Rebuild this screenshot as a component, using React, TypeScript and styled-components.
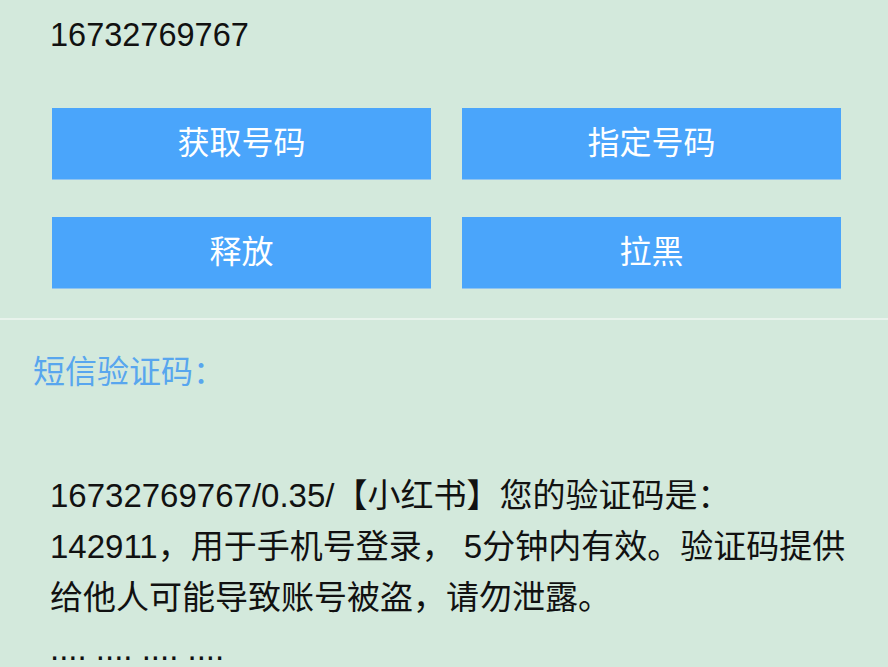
import styled, { createGlobalStyle } from 'styled-components';

const GlobalStyle = createGlobalStyle`
  html, body {
    margin: 0;
    padding: 0;
    background: #d3e9dc;
  }
  body {
    font-family: "Liberation Sans", "Noto Sans CJK SC", sans-serif;
    color: #111;
  }
`;

const Page = styled.div`
  width: 888px;
  height: 667px;
  overflow: hidden;
  background: #d3e9dc;
`;

const Top = styled.section`
  padding: 19px 47px 0 52px;
`;

const Phone = styled.div`
  font-size: 32.5px;
  line-height: 32px;
  height: 32px;
  margin-left: -2px;
`;

const ButtonGrid = styled.div`
  display: grid;
  grid-template-columns: 1fr 1fr;
  grid-auto-rows: 71px;
  column-gap: 31px;
  row-gap: 38px;
  margin-top: 57px;
`;

const ActionButton = styled.button`
  border: none;
  border-radius: 0;
  background: #4aa5fb;
  color: #fff;
  font-family: "Noto Sans CJK SC", sans-serif;
  font-size: 32px;
  padding: 0 0 7px;
  display: flex;
  align-items: center;
  justify-content: center;
  box-shadow: 0 1px 0 #8fc4f0;
`;

const Divider = styled.hr`
  border: none;
  height: 2px;
  background: #e8f3ec;
  margin: 30px 0 0;
`;

const SmsSection = styled.section`
  padding: 0 30px 0 33px;
`;

const SmsLabel = styled.div`
  color: #58a6ee;
  font-size: 32px;
  line-height: 32px;
  margin-top: 36px;
`;

const SmsBody = styled.div`
  margin-top: 82px;
  padding-left: 17px;
  font-size: 33px;
  line-height: 51px;
  white-space: pre-wrap;
`;

const buttons = ['获取号码', '指定号码', '释放', '拉黑'];

export default function App() {
  return (
    <Page>
      <GlobalStyle />
      <Top>
        <Phone>16732769767</Phone>
        <ButtonGrid>
          {buttons.map(label => (
            <ActionButton key={label}>{label}</ActionButton>
          ))}
        </ButtonGrid>
      </Top>
      <Divider />
      <SmsSection>
        <SmsLabel>短信验证码：</SmsLabel>
        <SmsBody>
          {'16732769767/0.35/【小红书】您的验证码是：142911，用于手机号登录， 5分钟内有效。验证码提供给他人可能导致账号被盗，请勿泄露。\n.... .... .... ....'}
        </SmsBody>
      </SmsSection>
    </Page>
  );
}
